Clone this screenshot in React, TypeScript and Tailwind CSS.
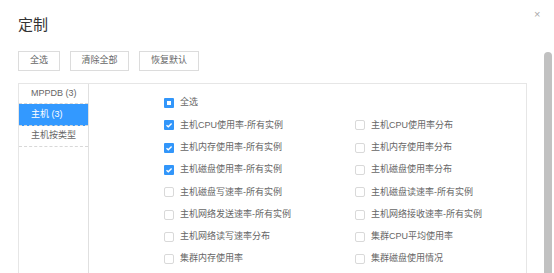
import React from "react";

type State = "checked" | "partial" | "empty";

const rows: [string, State, string | null, State | null][] = [
  ["全选", "partial", null, null],
  ["主机CPU使用率-所有实例", "checked", "主机CPU使用率分布", "empty"],
  ["主机内存使用率-所有实例", "checked", "主机内存使用率分布", "empty"],
  ["主机磁盘使用率-所有实例", "checked", "主机磁盘使用率分布", "empty"],
  ["主机磁盘写速率-所有实例", "empty", "主机磁盘读速率-所有实例", "empty"],
  ["主机网络发送速率-所有实例", "empty", "主机网络接收速率-所有实例", "empty"],
  ["主机网络读写速率分布", "empty", "集群CPU平均使用率", "empty"],
  ["集群内存使用率", "empty", "集群磁盘使用情况", "empty"],
];

function Box({ state }: { state: State }) {
  if (state === "empty") {
    return <span className="w-[10px] h-[10px] rounded-[2px] border border-[#d9d9d9] bg-white shrink-0" />;
  }
  return (
    <span className="w-[10px] h-[10px] rounded-[1px] bg-[#3296fa] flex items-center justify-center shrink-0">
      {state === "partial" ? (
        <span className="w-[4px] h-[4px] bg-white" />
      ) : (
        <svg width="8" height="8" viewBox="0 0 8 8">
          <path d="M1.5 4.2 L3.3 5.8 L6.6 2.4" stroke="white" strokeWidth="1.4" fill="none" />
        </svg>
      )}
    </span>
  );
}

function Item({ label, state }: { label: string; state: State }) {
  return (
    <div className="flex items-center gap-[6px]">
      <Box state={state} />
      <span>{label}</span>
    </div>
  );
}

export default function App() {
  const font = { fontFamily: '"Liberation Sans", "Noto Sans CJK SC", sans-serif' };
  return (
    <div className="w-[554px] h-[273px] bg-white overflow-hidden relative text-[#666]" style={font}>
      {/* close */}
      <div className="absolute left-[534px] top-[9px] text-[#aaa] text-[11px] leading-none">×</div>
      {/* scrollbar */}
      <div className="absolute left-[544px] top-[52px] w-[8px] h-[230px] rounded-t-full bg-[#c1c1c1]" />

      <div className="pl-[18px] pt-[14px]">
        <h1 className="text-[15px] leading-[22px] text-[#333] font-normal">定制</h1>

        <div className="flex gap-[10px] mt-[15px]">
          <button className="h-[20px] w-[42px] border border-[#dcdcdc] bg-white text-[9px] text-[#666]">全选</button>
          <button className="h-[20px] w-[59px] border border-[#dcdcdc] bg-white text-[9px] text-[#666]">清除全部</button>
          <button className="h-[20px] w-[60px] border border-[#dcdcdc] bg-white text-[9px] text-[#666]">恢复默认</button>
        </div>

        <div className="mt-[12px] w-[509px] h-[220px] border border-[#e6e6e6] flex">
          <div className="w-[70px] border-r border-[#e0e0e0] text-[9px] shrink-0">
            <div className="h-[20px] pl-[12px] flex items-center border-b border-dashed border-[#d8d8d8] text-[#666]">MPPDB (3)</div>
            <div className="h-[22px] pl-[12px] flex items-center border-b border-dashed border-[#d8d8d8] bg-[#3399ff] text-white">主机 (3)</div>
            <div className="h-[21px] pl-[12px] flex items-center border-b border-dashed border-[#d8d8d8] text-[#666]">主机按类型</div>
          </div>

          <div className="flex-1 pl-[75px] pt-[8px] text-[9px] text-[#666]">
            {rows.map(([l, ls, r, rs], i) => (
              <div key={i} className="grid grid-cols-[191px_1fr] h-[22.3px] items-center">
                <Item label={l} state={ls} />
                {r && rs ? <Item label={r} state={rs} /> : <span />}
              </div>
            ))}
          </div>
        </div>
      </div>
    </div>
  );
}
